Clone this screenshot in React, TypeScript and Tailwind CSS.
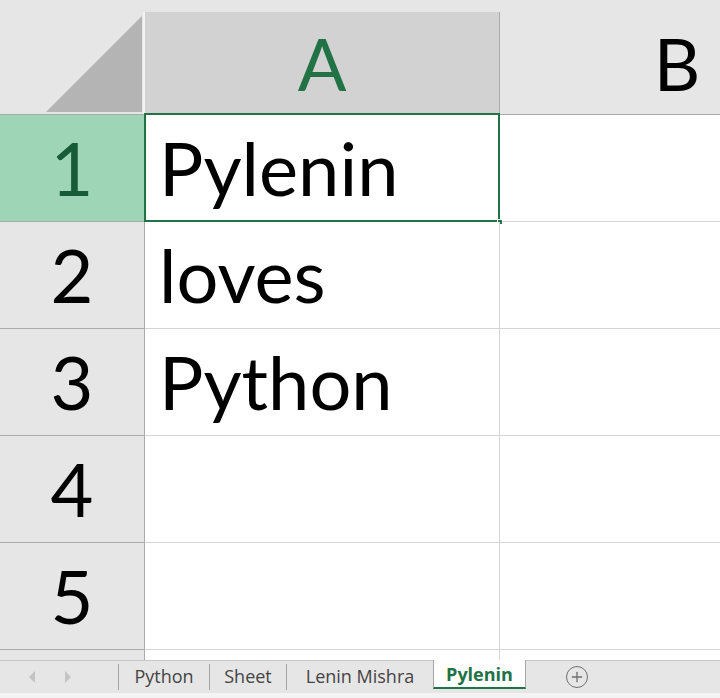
import { Plus } from 'lucide-react';

const rows = [
  { n: '1', a: 'Pylenin' },
  { n: '2', a: 'loves' },
  { n: '3', a: 'Python' },
  { n: '4', a: '' },
  { n: '5', a: '' },
];

const tabs = [
  { label: 'Python', w: 'w-[91px]' },
  { label: 'Sheet', w: 'w-[77px]' },
  { label: 'Lenin Mishra', w: 'w-[147px]' },
];

const cellFont = { fontFamily: 'Lato, "Open Sans", sans-serif' };

export default function App() {
  return (
    <div className="w-[720px] h-[698px] overflow-hidden bg-[#e6e6e6] flex flex-col" style={cellFont}>
      {/* column headers */}
      <div className="h-[12px] bg-[#e6e6e6]" />
      <div className="flex h-[103px] border-b border-[#ababab]">
        <div className="w-[145px] shrink-0 border-r-2 border-[#f3f3f3]">
          <svg width="143" height="102" className="block">
            <polygon points="142,4 142,100 46,100" fill="#b4b4b4" />
          </svg>
        </div>
        <div className="w-[355px] shrink-0 bg-[#d2d2d2] border-r border-[#ababab] flex items-center justify-center text-[72px] leading-none text-[#217346]">
          A
        </div>
        <div className="w-[354px] shrink-0 flex items-center justify-center text-[72px] leading-none text-black">B</div>
      </div>

      {/* grid rows */}
      {rows.map((r, i) => (
        <div key={r.n} className="flex h-[107px]">
          <div
            className={
              i === 0
                ? 'w-[145px] shrink-0 bg-[#9fd5b7] text-[#185c37] border-r border-b border-[#ababab] flex items-center justify-center text-[74px] leading-none'
                : 'w-[145px] shrink-0 bg-[#e6e6e6] text-black border-r border-b border-[#ababab] flex items-center justify-center text-[74px] leading-none'
            }
          >
            {r.n}
          </div>
          <div className="relative w-[355px] shrink-0 bg-white border-r border-b border-[#d4d4d4] flex items-center pl-[14px] text-[74px] leading-none text-black">
            {r.a}
            {i === 0 && (
              <>
                <div className="absolute -left-px -top-[2px] -right-px -bottom-px border-2 border-[#217346]" />
                <div className="absolute -right-[4px] -bottom-[4px] w-[6px] h-[6px] bg-[#217346] border border-white" />
              </>
            )}
          </div>
          <div className="flex-1 bg-white border-b border-[#d4d4d4]" />
        </div>
      ))}
      <div className="flex h-[10px]">
        <div className="w-[145px] shrink-0 bg-[#e6e6e6] border-r border-[#ababab]" />
        <div className="w-[355px] shrink-0 bg-white border-r border-[#d4d4d4]" />
        <div className="flex-1 bg-white" />
      </div>

      {/* sheet tabs */}
      <div
        className="flex h-[33px] border-t border-[#c6c6c6] bg-[#e6e6e6] text-[18px] text-[#444444]"
        style={{ fontFamily: '"Open Sans", "Noto Sans", sans-serif' }}
      >
        <div className="w-[118px] shrink-0 flex items-center pl-[29px] gap-[28px]">
          <svg width="7" height="12" viewBox="0 0 7 12">
            <polygon points="6,0 6,12 0,6" fill="#c4c4c4" />
          </svg>
          <svg width="7" height="12" viewBox="0 0 7 12">
            <polygon points="1,0 1,12 7,6" fill="#c4c4c4" />
          </svg>
        </div>
        {tabs.map((t) => (
          <div key={t.label} className={`${t.w} shrink-0 flex items-center justify-center border-l border-[#a6a6a6] my-[3px]`}>
            <span className="leading-none pb-[2px]">{t.label}</span>
          </div>
        ))}
        <div className="w-[93px] shrink-0 -mt-px bg-white border-x border-[#a6a6a6] border-b-2 border-b-[#217346] mb-[4px] flex items-center justify-center font-bold text-[#217346]">
          <span className="leading-none">Pylenin</span>
        </div>
        <div className="w-[102px] shrink-0 flex items-center justify-center">
          <div className="w-[22px] h-[22px] rounded-full border-[1.5px] border-[#6f6f6f] flex items-center justify-center text-[#6f6f6f]">
            <Plus size={16} strokeWidth={2} />
          </div>
        </div>
      </div>
      <div className="flex-1 bg-[#f3f3f3]" />
    </div>
  );
}
